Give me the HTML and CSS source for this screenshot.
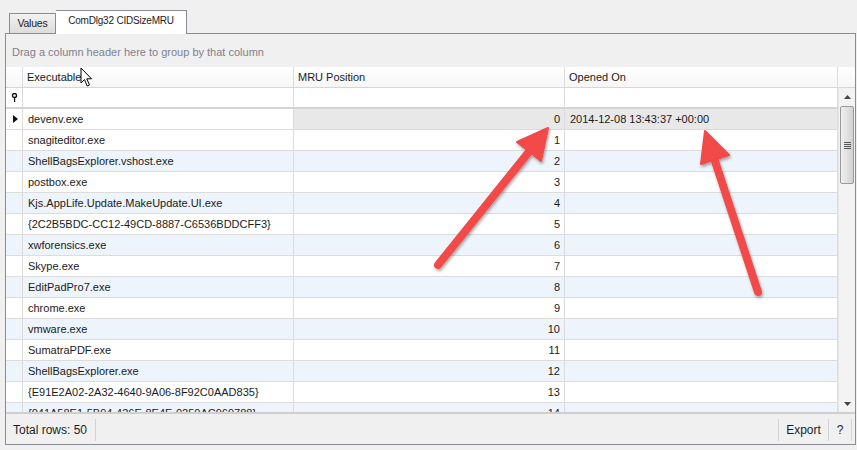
FILE: index.html
```html
<!DOCTYPE html>
<html>
<head>
<meta charset="utf-8">
<link rel="stylesheet" href="styles.css">
</head>
<body>
<div class="tabs">
  <div class="tab">Values</div>
  <div class="tab active">ComDlg32 CIDSizeMRU</div>
</div>
<div class="panel">
  <div class="group-area">Drag a column header here to group by that column</div>
  <div class="grid">
    <div class="row header">
      <div class="cell ind"></div>
      <div class="cell">Executable</div>
      <div class="cell">MRU Position</div>
      <div class="cell">Opened On</div>
      <div class="cell corner"></div>
    </div>
    <div class="grid-body">
      <div class="rows">
        <div class="row filter">
          <div class="cell ind"><svg width="7" height="9" viewBox="0 0 7 9"><circle cx="3.5" cy="2.5" r="2" fill="none" stroke="#111" stroke-width="1.4"/><rect x="3" y="4" width="1.2" height="5" fill="#111"/></svg></div>
          <div class="cell"></div>
          <div class="cell"></div>
          <div class="cell"></div>
        </div>
        <div class="row data selected">
          <div class="cell ind"><svg width="5" height="8" viewBox="0 0 5 8"><path d="M0 0 L5 4 L0 8 Z" fill="#111"/></svg></div>
          <div class="cell focus">devenv.exe</div>
          <div class="cell num">0</div>
          <div class="cell">2014-12-08 13:43:37 +00:00</div>
        </div>
        <div class="row data"><div class="cell ind"></div><div class="cell">snagiteditor.exe</div><div class="cell num">1</div><div class="cell"></div></div>
        <div class="row data alt"><div class="cell ind"></div><div class="cell">ShellBagsExplorer.vshost.exe</div><div class="cell num">2</div><div class="cell"></div></div>
        <div class="row data"><div class="cell ind"></div><div class="cell">postbox.exe</div><div class="cell num">3</div><div class="cell"></div></div>
        <div class="row data alt"><div class="cell ind"></div><div class="cell">Kjs.AppLife.Update.MakeUpdate.UI.exe</div><div class="cell num">4</div><div class="cell"></div></div>
        <div class="row data"><div class="cell ind"></div><div class="cell">{2C2B5BDC-CC12-49CD-8887-C6536BDDCFF3}</div><div class="cell num">5</div><div class="cell"></div></div>
        <div class="row data alt"><div class="cell ind"></div><div class="cell">xwforensics.exe</div><div class="cell num">6</div><div class="cell"></div></div>
        <div class="row data"><div class="cell ind"></div><div class="cell">Skype.exe</div><div class="cell num">7</div><div class="cell"></div></div>
        <div class="row data alt"><div class="cell ind"></div><div class="cell">EditPadPro7.exe</div><div class="cell num">8</div><div class="cell"></div></div>
        <div class="row data"><div class="cell ind"></div><div class="cell">chrome.exe</div><div class="cell num">9</div><div class="cell"></div></div>
        <div class="row data alt"><div class="cell ind"></div><div class="cell">vmware.exe</div><div class="cell num">10</div><div class="cell"></div></div>
        <div class="row data"><div class="cell ind"></div><div class="cell">SumatraPDF.exe</div><div class="cell num">11</div><div class="cell"></div></div>
        <div class="row data alt"><div class="cell ind"></div><div class="cell">ShellBagsExplorer.exe</div><div class="cell num">12</div><div class="cell"></div></div>
        <div class="row data"><div class="cell ind"></div><div class="cell">{E91E2A02-2A32-4640-9A06-8F92C0AAD835}</div><div class="cell num">13</div><div class="cell"></div></div>
        <div class="row data alt"><div class="cell ind"></div><div class="cell">{041A58E1-5B94-426E-8E4E-0250AC969788}</div><div class="cell num">14</div><div class="cell"></div></div>
      </div>
      <div class="vscroll">
        <div class="sarrow"><svg width="7" height="4" viewBox="0 0 7 4"><path d="M0 4 L3.5 0 L7 4 Z" fill="#444"/></svg></div>
        <div class="track">
          <div class="thumb"><div class="grip"></div></div>
        </div>
        <div class="sarrow"><svg width="7" height="4" viewBox="0 0 7 4"><path d="M0 0 L3.5 4 L7 0 Z" fill="#444"/></svg></div>
      </div>
    </div>
  </div>
  <div class="footer">
    <div class="fitem">Total rows: 50</div>
    <div class="spacer"></div>
    <div class="fitem btn">Export</div>
    <div class="fitem btn help">?</div>
  </div>
</div>

<svg class="cursor" width="14" height="22" viewBox="0 0 14 22">
  <path d="M1 1 L1 16 L4.5 12.5 L7.2 19 L9.5 18 L6.8 11.8 L11.5 11.8 Z" fill="#fff" stroke="#000" stroke-width="1" stroke-linejoin="miter"/>
</svg>

<svg class="arrows" width="857" height="450" viewBox="0 0 857 450">
  <defs>
    <filter id="sh" x="-20%" y="-20%" width="140%" height="140%">
      <feDropShadow dx="1" dy="2" stdDeviation="1.5" flood-color="#000" flood-opacity="0.35"/>
    </filter>
  </defs>
  <g filter="url(#sh)" fill="#f24848" stroke="#f24848">
    <line x1="438" y1="265" x2="532" y2="148" stroke-width="8" stroke-linecap="round"/>
    <polygon points="548,128 541,161 517,142" stroke-width="2" stroke-linejoin="round"/>
    <line x1="758" y1="292" x2="713" y2="155" stroke-width="8" stroke-linecap="round"/>
    <polygon points="705,131 729,155 701,164" stroke-width="2" stroke-linejoin="round"/>
  </g>
</svg>
</body>
</html>
```

FILE: styles.css
```css
* { box-sizing: border-box; }
html, body { margin: 0; padding: 0; }
body {
  width: 857px;
  height: 450px;
  background: #f0f0f0;
  font-family: "Liberation Sans", Arial, sans-serif;
  font-size: 11px;
  color: #1a1a1a;
  overflow: hidden;
  position: relative;
}
.tabs {
  display: flex;
  align-items: flex-end;
  height: 34px;
  padding-left: 9px;
  position: relative;
  z-index: 2;
}
.tab {
  height: 20px;
  width: 47px;
  border: 1px solid #898c95;
  border-bottom: none;
  background: linear-gradient(#f2f2f2, #dcdcdc);
  line-height: 18px;
  margin-bottom: 1px;
  font-size: 10.5px;
  letter-spacing: -0.2px;
  text-align: center;
}
.tab.active {
  height: 24px;
  width: 131px;
  margin-bottom: 0;
  background: #fff;
  border-left: none;
  line-height: 20px;
  font-size: 10px;
}
.panel {
  margin: -1px 1px 0 5px;
  height: 412px;
  border: 1px solid #898c95;
  background: #f0f0f0;
  display: flex;
  flex-direction: column;
}
.group-area {
  height: 33px;
  padding: 12px 0 0 6px;
  color: #80808c;
  background: #f0f0f0;
}
.grid {
  height: 347px;
  background: #fff;
  border-bottom: 2px solid #cfcfcf;
  display: flex;
  flex-direction: column;
  overflow: hidden;
}
.row {
  display: grid;
  grid-template-columns: 17px 271px 271px 273px;
}
.row.header {
  grid-template-columns: 17px 271px 271px 273px 17px;
  height: 21px;
  background: linear-gradient(#ffffff, #f6f6f6);
  border-bottom: 1px solid #d6d6d6;
}
.cell {
  border-right: 1px solid #dcdcdc;
  padding: 0 4px;
  white-space: nowrap;
  overflow: hidden;
  display: flex;
  align-items: center;
}
.header .cell { padding-left: 4px; }
.header .cell.corner { border-right: none; }
.cell.ind { padding: 0; justify-content: center; }
.grid-body {
  flex: 1;
  display: flex;
  min-height: 0;
}
.rows {
  flex: 1;
  overflow: hidden;
}
.row.filter {
  height: 21px;
  border-bottom: 2px solid #d4d4d4;
  background: #fff;
}
.row.data {
  height: 21px;
  border-bottom: 1px solid #dcdcdc;
  background: #fff;
}
.row.data .cell { padding-left: 5px; }
.row.data .cell.ind { padding: 0 0 0 2px; }
.row.data .cell.num { justify-content: flex-end; padding-right: 4px; }
.row.alt { background: #edf4fc; }
.row.selected { background: #e8e8e8; }
.row.selected .cell.ind { background: #fff; }
.row.selected .cell.focus { background: #fff; }
.vscroll {
  width: 17px;
  display: flex;
  flex-direction: column;
  background: #f3f3f3;
  border-left: 1px solid #e6e6e6;
}
.sarrow {
  height: 17px;
  display: flex;
  align-items: center;
  justify-content: center;
}
.track {
  flex: 1;
  padding: 1px 1px;
}
.thumb {
  height: 78px;
  border: 1px solid #9a9a9a;
  border-radius: 2px;
  background: linear-gradient(90deg, #f0f0f0, #dedede 60%, #d2d2d2);
  display: flex;
  align-items: center;
  justify-content: center;
}
.grip {
  width: 7px;
  height: 7px;
  background: repeating-linear-gradient(#555 0 1px, transparent 1px 2px);
}
.footer {
  flex: 1;
  display: flex;
  align-items: center;
  padding: 4px 0 2px 0;
}
.fitem {
  height: 22px;
  display: flex;
  align-items: center;
  padding: 0 8px 0 7px;
  border-right: 1px solid #d4d4d4;
  font-size: 12px;
  color: #1e1e1e;
}
.fitem.btn {
  border-left: 1px solid #d4d4d4;
  border-right: none;
  width: 50px;
  justify-content: center;
  padding: 0;
}
.fitem.help {
  width: 24px;
  border-right: 1px solid #d4d4d4;
  margin-right: 3px;
}
.spacer { flex: 1; }
.cursor {
  position: absolute;
  left: 80px;
  top: 67px;
}
.arrows {
  position: absolute;
  left: 0;
  top: 0;
  pointer-events: none;
}
```
